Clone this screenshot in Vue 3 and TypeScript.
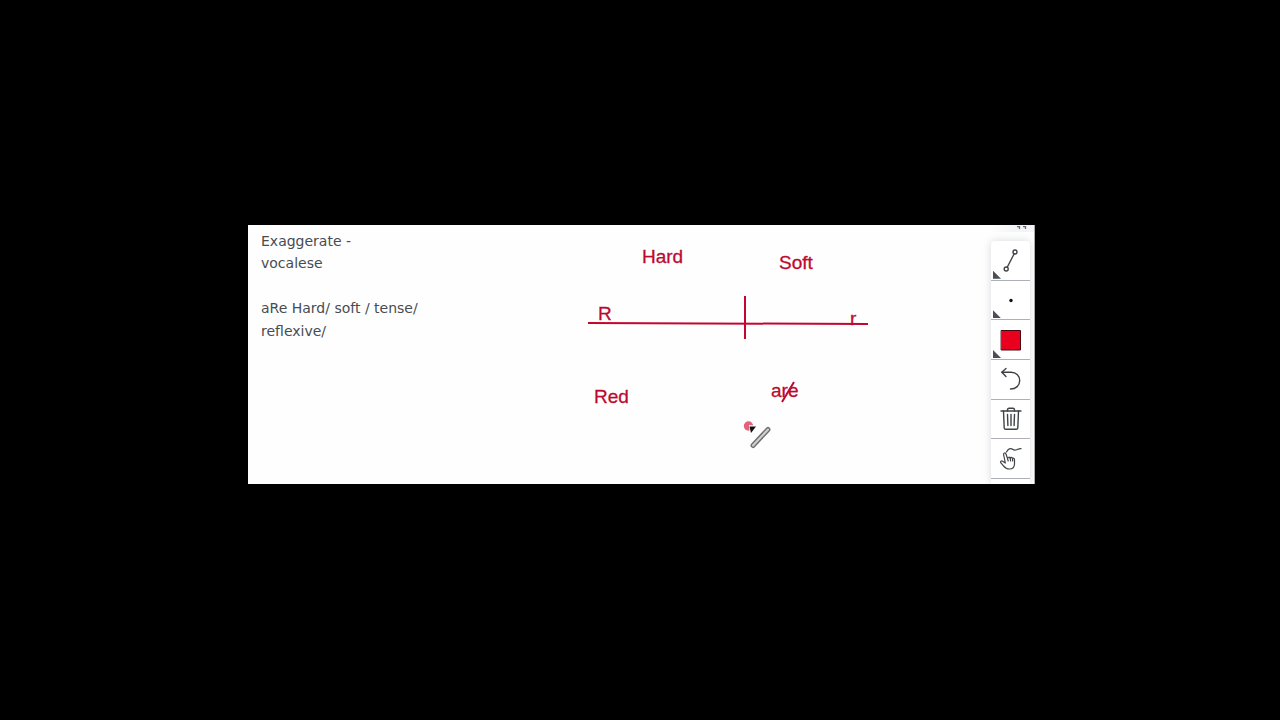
<script setup lang="ts">
import { ref } from 'vue'

interface Tool {
  id: string
  label: string
  menu: boolean
}

interface Label {
  text: string
  x: number
  y: number
}

const tools: Tool[] = [
  { id: 'line', label: 'Line', menu: true },
  { id: 'size', label: 'Stroke size', menu: true },
  { id: 'color', label: 'Colour', menu: true },
  { id: 'undo', label: 'Undo', menu: false },
  { id: 'clear', label: 'Clear', menu: false },
  { id: 'gesture', label: 'Draw by hand', menu: false },
]

const labels: Label[] = [
  { text: 'Hard', x: 394, y: 38 },
  { text: 'Soft', x: 531, y: 44 },
  { text: 'R', x: 350, y: 95 },
  { text: 'r', x: 602, y: 100 },
  { text: 'Red', x: 346, y: 178 },
  { text: 'are', x: 523, y: 172 },
]

const active = ref('line')
</script>

<template>
  <main class="stage">
    <section class="board" aria-label="Whiteboard">
      <svg class="canvas" viewBox="0 0 787 259" preserveAspectRatio="xMinYMin meet">
        <g class="ink">
          <path d="M340 98 L620 99" />
          <path d="M497 71 V114" />
          <path d="M534 177 L546 157" />
        </g>
        <text v-for="l in labels" :key="l.text" class="label" :x="l.x" :y="l.y">{{ l.text }}</text>
        <circle cx="500.5" cy="201" r="4.7" fill="#e3637a" />
        <path d="M501 200 L511 201 L502 210 Z" fill="#fff" />
        <path d="M501.500 201.500 H508 L503 208 Z" fill="#111" />
        <path d="M505 220.500 L520 204.500" stroke="#6f6f6f" stroke-width="5" stroke-linecap="round" />
        <path d="M505 220.500 L520 204.500" stroke="#cfcfcf" stroke-width="2.200" stroke-linecap="round" />
      </svg>

      <div class="notes">
        <p>Exaggerate -<br />vocalese</p>
        <p>aRe Hard/ soft / tense/<br />reflexive/</p>
      </div>

      <aside class="side">
        <div class="handle">
          <svg width="12" height="4" viewBox="0 0 12 4">
            <path d="M2 0.500 H4.500 V3 M10.500 3 V0.500 H8" fill="none" stroke="#666a72" stroke-width="1.300" />
          </svg>
        </div>
        <div class="toolbar" role="toolbar" aria-label="Drawing tools">
          <button
            v-for="t in tools"
            :key="t.id"
            type="button"
            class="tool"
            :aria-label="t.label"
            :aria-pressed="active === t.id"
            @click="active = t.id"
          >
            <svg class="icon" viewBox="0 0 24 24" aria-hidden="true">
              <g v-if="t.id === 'line'">
                <path d="M8.200 19.200 L15.200 5.800" />
                <circle cx="7.200" cy="21" r="2" />
                <circle cx="16" cy="4" r="2" />
              </g>
              <circle v-else-if="t.id === 'size'" cx="12" cy="12.500" r="1.700" class="dot" />
              <rect v-else-if="t.id === 'color'" x="2.500" y="2.500" width="19" height="19.500" class="swatch" />
              <g v-else-if="t.id === 'undo'">
                <path d="M7 1.500 L2.800 5.200 L7 9.500" />
                <path d="M2.800 5.200 H12 C17.500 5.200 20.700 9 20.700 13.500 C20.700 18.500 17 22 11.500 22" />
              </g>
              <g v-else-if="t.id === 'clear'">
                <path d="M2 4 H22" />
                <path d="M8.500 4 V3 Q8.500 1.300 10 1.300 H14 Q15.500 1.300 15.500 3 V4" />
                <path d="M4.500 4 L5.200 21 Q5.300 22.300 6.800 22.300 H17.200 Q18.700 22.300 18.800 21 L19.500 4" />
                <path d="M8.500 7.500 L8.900 18.500 M12 7.500 V18.500 M15.500 7.500 L15.100 18.500" />
              </g>
              <g v-else class="thin">
                <path d="M7.500 5 C9 2 11.500 0.500 14 2.500 C16.500 4.500 18.500 1.500 22 1.700" />
                <path d="M6.300 16 L4.600 7.500 C4.300 5.800 6.500 5.300 7 7 L8.600 11.800 C8.600 10 10.700 9.600 11.200 11.300 C11.500 9.900 13.200 10.100 13.500 11.700 C14 10.700 15.500 11.200 15.500 12.700 V17 C15.400 20.200 13.500 22 10.500 22 C7.500 22 6 21 4.500 18.900 L1.700 15.700 C0.900 14.300 2.500 13.400 3.700 14.300 L6.300 16" />
                <path d="M8.600 11.800 L9.200 14 M11.200 11.300 L11.600 14 M13.500 11.700 L13.700 14" />
              </g>
            </svg>
            <span v-if="t.menu" class="corner"></span>
          </button>
        </div>
      </aside>
    </section>
  </main>
</template>

<style>
body {
  margin: 0;
  background: #000;
}
</style>

<style scoped>
.stage {
  min-height: 100vh;
  display: grid;
  grid-template-columns: 248fr 787fr 245fr;
  grid-template-rows: 225fr 259fr 236fr;
  background: #000;
}
.board {
  grid-area: 2 / 2;
  position: relative;
  display: flex;
  justify-content: space-between;
  overflow: hidden;
  background: #fefefe;
  box-sizing: border-box;
  border-right: 1px solid #aaa;
}
.canvas {
  position: absolute;
  top: 0;
  left: 0;
  width: calc(100% + 1px);
}
.ink path {
  stroke: #c4062e;
  stroke-width: 2;
}
.label {
  font: 19px "Liberation Sans", Arial, sans-serif;
  fill: #bb0a30;
  stroke: #bb0a30;
  stroke-width: 0.3px;
}
.notes {
  position: relative;
  padding: 5px 0 0 13px;
  font: 14px/1.6 "DejaVu Sans", Verdana, sans-serif;
  color: #484c52;
}
.notes p {
  margin: 0 0 1.6em;
}
.side {
  position: relative;
  display: flex;
  flex-direction: column;
  width: 43px;
}
.handle {
  height: 7px;
  margin-bottom: 9px;
  padding-left: 24px;
  line-height: 0;
  background: linear-gradient(90deg, transparent, #f3f4f8 24px);
}
.toolbar {
  flex: 1;
  display: grid;
  grid-template-rows: repeat(6, 1fr);
  width: 39px;
  padding-bottom: 5px;
  box-sizing: border-box;
  border-radius: 4px 4px 0 0;
  background: #fff;
  box-shadow: 0 0 8px #d9dade;
}
.tool {
  position: relative;
  display: grid;
  place-items: center;
  min-height: 0;
  margin: 0;
  padding: 0;
  border: 0;
  border-bottom: 1px solid #adb0b4;
  background: none;
  cursor: pointer;
}
.icon {
  width: 24px;
  height: 24px;
  fill: none;
  stroke: #3f4247;
  stroke-width: 1.4;
  stroke-linecap: round;
  stroke-linejoin: round;
}
.thin {
  stroke-width: 1.2;
}
.dot {
  fill: #111;
  stroke: none;
}
.swatch {
  fill: #e9001f;
  stroke: #470812;
  stroke-width: 1;
}
.corner {
  position: absolute;
  left: 2px;
  bottom: 1px;
  width: 8px;
  height: 8px;
  background: #4a4e55;
  clip-path: polygon(0 0, 100% 100%, 0 100%);
}
</style>
